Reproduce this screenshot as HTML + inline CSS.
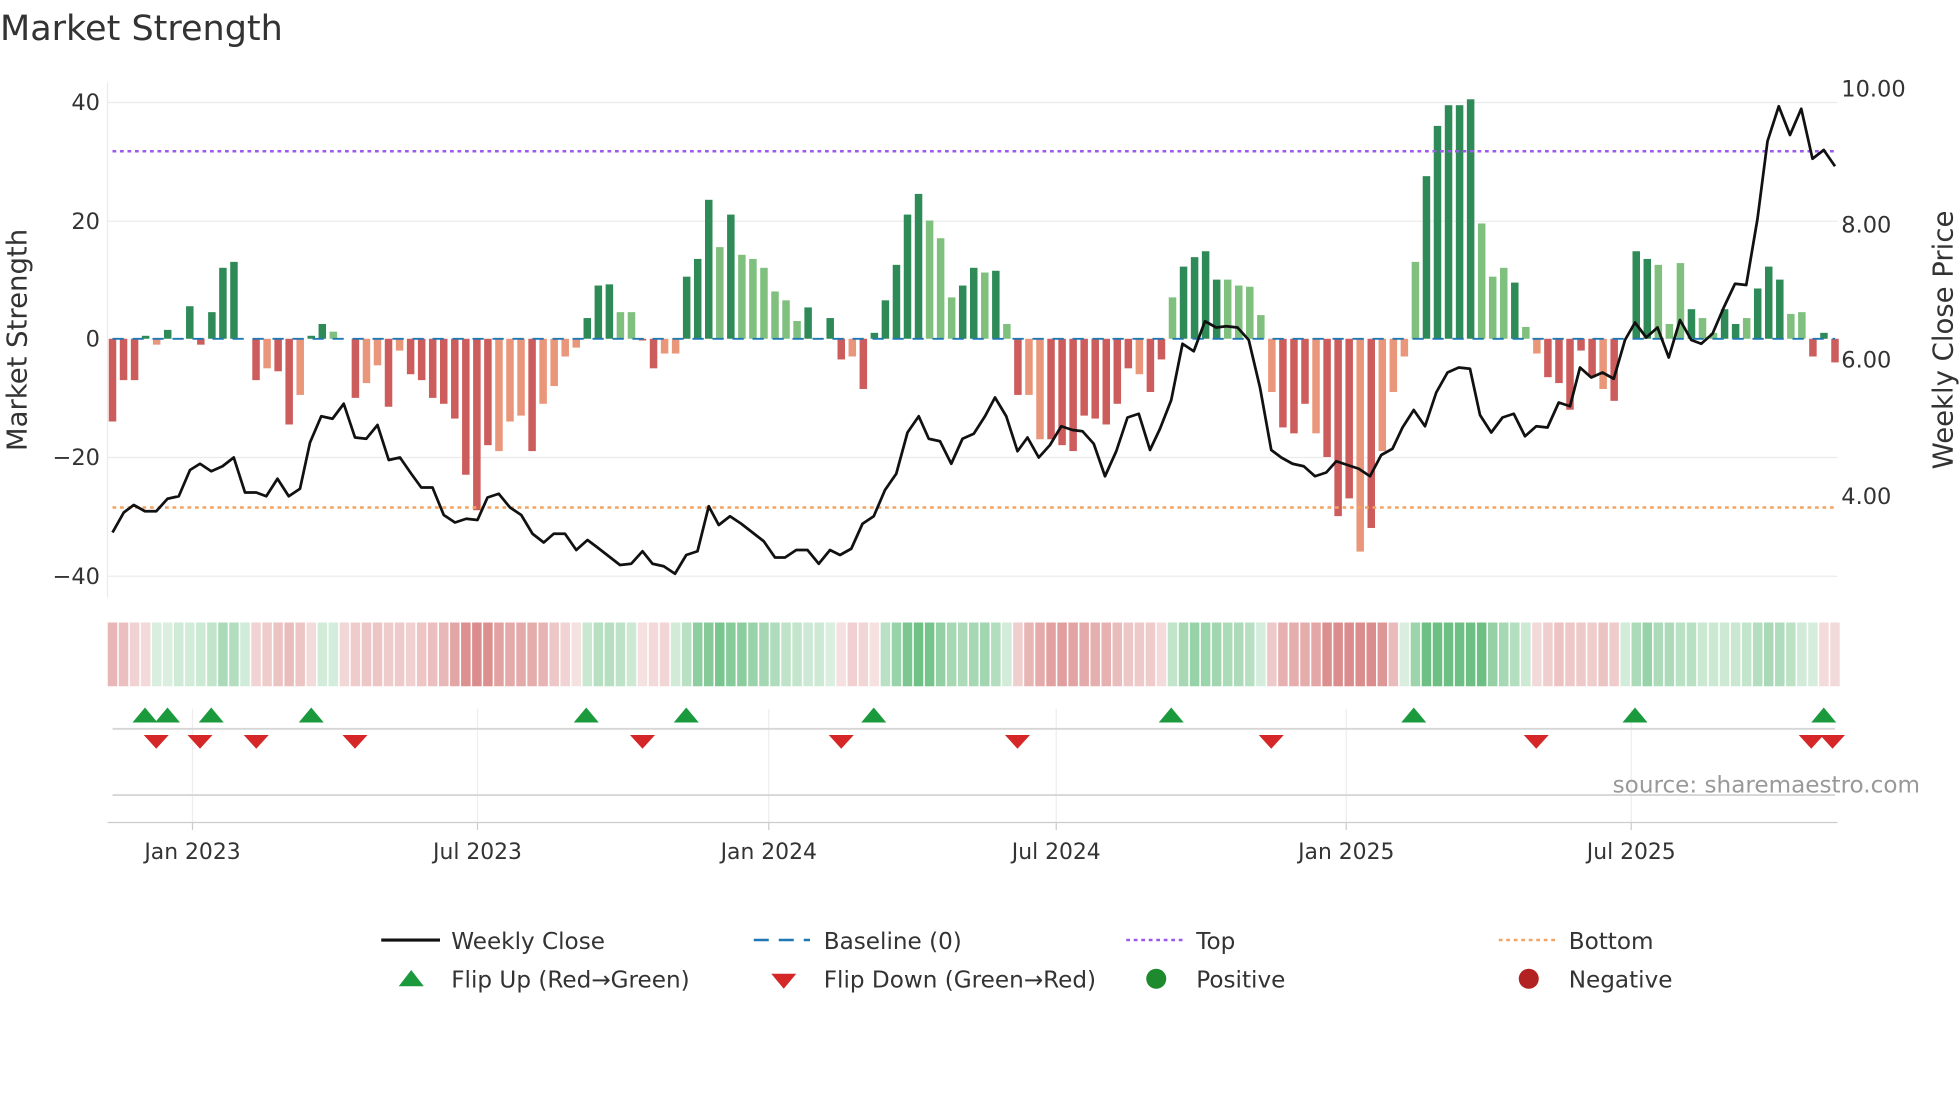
<!DOCTYPE html>
<html><head><meta charset="utf-8"><style>
html,body{margin:0;padding:0;background:#fff;width:1960px;height:1102px;overflow:hidden}
svg{display:block}
text{font-family:"DejaVu Sans","Liberation Sans",sans-serif;fill:#333}
</style></head><body>
<svg id="s" width="1960" height="1102" viewBox="0 0 1568 881.6" xmlns="http://www.w3.org/2000/svg">
<text x="0" y="32" font-size="28" fill="#333">Market Strength</text>
<g stroke="#ebebeb" stroke-width="1">
<line x1="86" x2="1470" y1="82" y2="82"/><line x1="86" x2="1470" y1="177" y2="177"/>
<line x1="86" x2="1470" y1="366" y2="366"/><line x1="86" x2="1470" y1="461" y2="461"/>
<line x1="86" x2="86" y1="66" y2="478"/>
</g>
<g font-size="18" text-anchor="end">
<text x="80" y="88">40</text><text x="80" y="183">20</text><text x="80" y="277">0</text>
<text x="80" y="372">−20</text><text x="80" y="467">−40</text>
</g>
<g font-size="18">
<text x="1473" y="77">10.00</text><text x="1473" y="186">8.00</text>
<text x="1473" y="294">6.00</text><text x="1473" y="403">4.00</text>
</g>
<text transform="translate(21,272) rotate(-90)" font-size="22" text-anchor="middle">Market Strength</text>
<text transform="translate(1562,272) rotate(-90)" font-size="22" text-anchor="middle">Weekly Close Price</text>
<g id="bars"></g>
<line x1="90" x2="1468" y1="271" y2="271" stroke="#1f77b4" stroke-width="1.5" stroke-dasharray="9,7"/>
<line x1="90" x2="1468" y1="121" y2="121" stroke="#9b59f0" stroke-width="2" stroke-dasharray="3,3"/>
<line x1="90" x2="1468" y1="406" y2="406" stroke="#f4a460" stroke-width="2" stroke-dasharray="3,3"/>
<polyline id="price" fill="none" stroke="#111" stroke-width="2.2" stroke-linejoin="round"/>
<g id="strip"></g>
<g stroke="#eee"><line x1="154" x2="154" y1="567" y2="658"/><line x1="382" x2="382" y1="567" y2="658"/><line x1="615" x2="615" y1="567" y2="658"/><line x1="845" x2="845" y1="567" y2="658"/><line x1="1077" x2="1077" y1="567" y2="658"/><line x1="1305" x2="1305" y1="567" y2="658"/></g>
<line x1="90" x2="1468" y1="583" y2="583" stroke="#d6d6d6" stroke-width="1.5"/>
<line x1="90" x2="1468" y1="636" y2="636" stroke="#d6d6d6" stroke-width="1.5"/>
<line x1="86" x2="1470" y1="658" y2="658" stroke="#ccc" stroke-width="1"/>
<g id="tri"></g>
<text x="1536" y="634" font-size="18.5" text-anchor="end" style="fill:#999">source: sharemaestro.com</text>
<g stroke="#ccc"><line x1="154" x2="154" y1="658" y2="664"/><line x1="382" x2="382" y1="658" y2="664"/><line x1="615" x2="615" y1="658" y2="664"/><line x1="845" x2="845" y1="658" y2="664"/><line x1="1077" x2="1077" y1="658" y2="664"/><line x1="1305" x2="1305" y1="658" y2="664"/></g>
<g font-size="17.5" text-anchor="middle">
<text x="154" y="687">Jan 2023</text><text x="382" y="687">Jul 2023</text><text x="615" y="687">Jan 2024</text>
<text x="845" y="687">Jul 2024</text><text x="1077" y="687">Jan 2025</text><text x="1305" y="687">Jul 2025</text>
</g>
<g font-size="18.5">
<line x1="305" x2="352" y1="752" y2="752" stroke="#111" stroke-width="2.5"/><text x="361" y="759">Weekly Close</text>
<line x1="603" x2="648" y1="752" y2="752" stroke="#1f77b4" stroke-width="2" stroke-dasharray="12,8"/><text x="659" y="759">Baseline (0)</text>
<line x1="901" x2="946" y1="752" y2="752" stroke="#9b59f0" stroke-width="2" stroke-dasharray="3,3"/><text x="957" y="759">Top</text>
<line x1="1199" x2="1244" y1="752" y2="752" stroke="#f4a460" stroke-width="2" stroke-dasharray="3,3"/><text x="1255" y="759">Bottom</text>
<polygon points="319,789 329,776 339,789" fill="#1a9a3c"/><text x="361" y="790">Flip Up (Red→Green)</text>
<polygon points="617,779 637,779 627,791" fill="#d62728"/><text x="659" y="790">Flip Down (Green→Red)</text>
<circle cx="925" cy="783" r="8" fill="#1e8a2e"/><text x="957" y="790">Positive</text>
<circle cx="1223" cy="783" r="8" fill="#b22222"/><text x="1255" y="790">Negative</text>
</g>
</svg>
<script>
var NS="http://www.w3.org/2000/svg";
var v=[-14,-7,-7,0.5,-1,1.5,0,5.5,-1,4.5,12,13,0,-7,-5,-5.5,-14.5,-9.5,0.5,2.5,1.2,0,-10,-7.5,-4.5,-11.5,-2,-6,-7,-10,-11,-13.5,-23,-29,-18,-19,-14,-13,-19,-11,-8,-3,-1.5,3.5,9,9.2,4.5,4.5,-0.3,-5,-2.5,-2.5,10.5,13.5,23.5,15.5,21,14.2,13.5,12,8,6.5,3,5.3,0,3.5,-3.5,-3,-8.5,1,6.5,12.5,21,24.5,20,17,7,9,12,11.2,11.5,2.5,-9.5,-9.5,-17,-17,-18,-19,-13,-13.5,-14.5,-11,-5,-6,-9,-3.5,7,12.2,13.8,14.8,10,10,9,8.8,4,-9,-15,-16,-11,-16,-20,-30,-27,-36,-32,-19,-9,-3,13,27.5,36,39.5,39.5,40.5,19.5,10.5,12,9.5,2,-2.5,-6.5,-7.5,-12,-2,-6.5,-8.5,-10.5,0,14.8,13.5,12.5,2.5,12.8,5,3.5,1,5,2.5,3.5,8.5,12.2,10,4.2,4.5,-3,1,-4];
var light={4:1,14:1,17:1,20:1,23:1,24:1,26:1,35:1,36:1,37:1,39:1,40:1,41:1,42:1,46:1,47:1,50:1,51:1,55:1,57:1,58:1,59:1,60:1,61:1,62:1,67:1,74:1,75:1,76:1,79:1,81:1,83:1,84:1,93:1,96:1,101:1,102:1,103:1,104:1,105:1,109:1,113:1,115:1,116:1,117:1,118:1,124:1,125:1,126:1,128:1,129:1,135:1,140:1,141:1,142:1,144:1,145:1,148:1,152:1,153:1};
var bars=document.getElementById("bars"),strip=document.getElementById("strip");
var n=v.length,dx=(1468-90)/(n-1);
function el(t,a,p){var e=document.createElementNS(NS,t);for(var k in a)e.setAttribute(k,a[k]);p.appendChild(e);return e;}
for(var i=0;i<n;i++){var x=90+i*dx,val=v[i],h=Math.abs(val)*4.73,col;
 if(val>=0)col=light[i]?"#7fc07f":"#2e8b57";else col=light[i]?"#e9967a":"#cd5c5c";
 if(h>0.3)el("rect",{x:x-3,y:val>=0?271-h:271,width:6,height:Math.max(h,1),fill:col},bars);
 var s=(v[Math.max(0,i-1)]+val+v[Math.min(n-1,i+1)])/3,a=Math.min(1,0.25+Math.abs(s)/30);
 var sc=s>=0?"rgba(60,170,90,"+(a*0.75)+")":"rgba(200,80,80,"+(a*0.65)+")";
 el("rect",{x:x-3.8,y:498,width:7.6,height:51,fill:sc},strip);}
var P=[90,426,99,410,107,404,116,409,125,409,134,399,143,397,152,376,160,371,169,377,178,373,187,366,196,394,205,394,213,397,222,383,231,397,240,391,248,354,257,333,266,335,275,323,284,350,293,351,302,340,311,368,320,366,329,379,337,390,346,390,355,412,364,418,373,415,382,416,390,398,399,395,408,406,417,412,426,427,435,434,443,427,452,427,461,440,470,432,478,438,487,445,496,452,505,451,514,441,522,451,531,453,540,459,549,444,558,441,567,405,575,420,584,413,593,419,602,426,611,433,620,446,628,446,637,440,646,440,655,451,664,440,672,444,681,439,690,419,699,413,708,392,717,379,726,346,735,333,743,351,752,353,761,371,770,351,779,347,788,333,796,318,805,333,814,361,822,350,831,366,840,356,849,341,858,344,866,345,875,355,884,381,893,361,902,334,911,331,920,360,928,343,937,320,946,275,955,281,964,257,973,262,981,261,990,262,999,272,1008,310,1017,360,1025,366,1034,371,1043,373,1052,381,1061,378,1069,369,1078,372,1087,375,1096,381,1105,364,1114,359,1122,342,1131,328,1140,341,1149,314,1158,298,1167,294,1176,295,1184,332,1193,346,1202,334,1211,331,1220,349,1229,341,1238,342,1247,322,1256,325,1264,294,1273,302,1282,298,1291,303,1300,272,1308,258,1317,270,1326,262,1335,286,1344,256,1353,272,1361,275,1370,267,1379,246,1388,227,1397,228,1406,175,1414,113,1423,85,1432,108,1441,87,1450,127,1459,120,1468,133];
var pts=[];for(var j=0;j<P.length;j+=2)pts.push(P[j]+","+P[j+1]);
document.getElementById("price").setAttribute("points",pts.join(" "));
var tri=document.getElementById("tri");
[116,134,169,249,469,549,699,937,1131,1308,1459].forEach(function(x){el("polygon",{points:(x-10)+",578 "+x+",566 "+(x+10)+",578",fill:"#1a9a3c"},tri);});
[125,160,205,284,514,673,814,1017,1229,1449,1466].forEach(function(x){el("polygon",{points:(x-10)+",588 "+(x+10)+",588 "+x+",599",fill:"#d62728"},tri);});
</script>
</body></html>
